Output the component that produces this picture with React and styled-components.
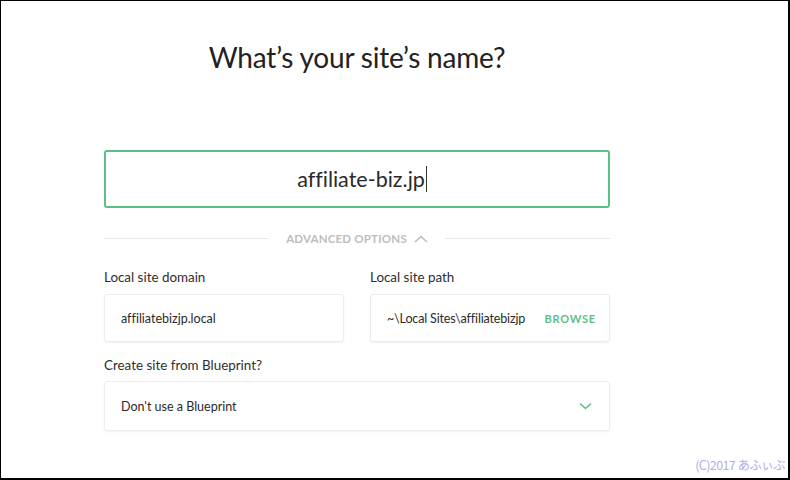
import React from "react";
import styled, { createGlobalStyle } from "styled-components";

const Global = createGlobalStyle`
  html, body { margin: 0; padding: 0; background: #fff; }
  body { font-family: Lato, "Noto Sans", sans-serif; font-variant-ligatures: none; }
  * { box-sizing: border-box; }
`;

const Frame = styled.div`
  width: 790px;
  height: 480px;
  border-style: solid;
  border-color: #000;
  border-width: 1px 2px 2px 1px;
  background: #fff;
  position: relative;
  overflow: hidden;
  padding: 38px 0 0 103px;
`;

const Column = styled.div`
  width: 506px;
  display: flex;
  flex-direction: column;
`;

const Title = styled.h1`
  margin: 0;
  text-align: center;
  font-weight: 400;
  font-size: 28px;
  line-height: 36px;
  color: #222;
  letter-spacing: -0.2px;
`;

const NameBox = styled.div`
  margin-top: 75px;
  height: 58px;
  border: 2px solid #5cbf85;
  border-radius: 3px;
  display: flex;
  align-items: center;
  justify-content: center;
  padding-left: 10px;
  font-size: 21.5px;
  color: #2a2a2a;
`;

const Caret = styled.span`
  display: inline-block;
  width: 1px;
  height: 26px;
  background: #333;
  margin-left: 1px;
`;

const Divider = styled.div`
  margin-top: 24px;
  display: flex;
  align-items: center;
  gap: 17px;
  &::before, &::after {
    content: "";
    flex: 1;
    height: 1px;
    background: #e8e8e8;
  }
`;

const Toggle = styled.div`
  display: flex;
  align-items: center;
  gap: 7px;
  font-size: 11.5px;
  font-weight: 700;
  color: #bdbdbd;
  letter-spacing: 0.2px;
`;

const Row = styled.div`
  margin-top: 24px;
  display: grid;
  grid-template-columns: 240px 240px;
  justify-content: space-between;
`;

const Field = styled.div`
  display: flex;
  flex-direction: column;
`;

const Label = styled.div`
  font-size: 13.4px;
  color: #2e2e2e;
  line-height: 16px;
  margin-bottom: ${(p) => p.$mb ?? 9}px;
`;

const Box = styled.div`
  height: ${(p) => p.$h || 48}px;
  border: 1px solid #ececec;
  border-radius: 3px;
  box-shadow: 0 1px 2px rgba(0, 0, 0, 0.06);
  display: flex;
  align-items: center;
  justify-content: space-between;
  padding: 0 ${(p) => p.$pr || 13}px 0 16px;
  font-size: 12.5px;
  color: #2a2a2a;
`;

const PathText = styled.span`
  letter-spacing: -0.15px;
`;

const Browse = styled.span`
  font-size: 11px;
  font-weight: 700;
  color: #5cbf85;
  letter-spacing: 0.8px;
`;

const BlueprintField = styled(Field)`
  margin-top: 15px;
`;

const Copyright = styled.div`
  position: absolute;
  right: 3px;
  bottom: 4px;
  font-size: 12.5px;
  color: #aeaee6;
  font-family: "Noto Sans CJK JP", sans-serif;
  letter-spacing: -0.6px;
`;

const ChevronUp = () => (
  <svg width="14" height="8" viewBox="0 0 14 8" fill="none">
    <path d="M1 7 L7 1.5 L13 7" stroke="#bdbdbd" strokeWidth="1.6" />
  </svg>
);

const ChevronDown = () => (
  <svg width="13" height="8" viewBox="0 0 13 8" fill="none">
    <path d="M1 1.5 L6.5 6.5 L12 1.5" stroke="#5cbf85" strokeWidth="1.6" />
  </svg>
);

export default function App() {
  return (
    <>
      <Global />
      <Frame>
        <Column>
          <Title>What’s your site’s name?</Title>
          <NameBox>
            affiliate-biz.jp
            <Caret />
          </NameBox>
          <Divider>
            <Toggle>
              ADVANCED OPTIONS <ChevronUp />
            </Toggle>
          </Divider>
          <Row>
            <Field>
              <Label>Local site domain</Label>
              <Box>affiliatebizjp.local</Box>
            </Field>
            <Field>
              <Label>Local site path</Label>
              <Box>
                <PathText>~\Local Sites\affiliatebizjp</PathText>
                <Browse>BROWSE</Browse>
              </Box>
            </Field>
          </Row>
          <BlueprintField>
            <Label $mb={8}>Create site from Blueprint?</Label>
            <Box $h={50} $pr={17}>
              Don't use a Blueprint
              <ChevronDown />
            </Box>
          </BlueprintField>
        </Column>
        <Copyright>(C)2017 あふぃぶ</Copyright>
      </Frame>
    </>
  );
}
